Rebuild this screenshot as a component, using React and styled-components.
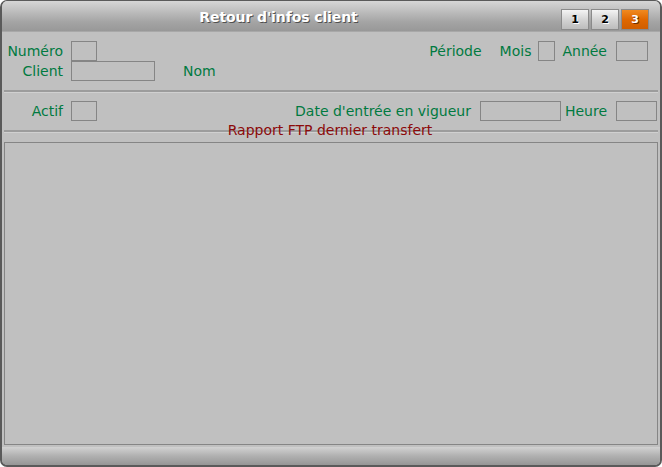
import React from 'react';
import styled, { createGlobalStyle } from 'styled-components';

const GlobalStyle = createGlobalStyle`
    html, body {
        margin: 0;
        padding: 0;
        background: #ffffff;
    }
    body {
        font-family: "DejaVu Sans", Verdana, sans-serif;
    }
`;

const Window = styled.div`
    width: 662px;
    height: 467px;
    box-sizing: border-box;
    display: flex;
    flex-direction: column;
    background: #c0c0c0;
    border: 2px solid #5a5a5a;
    border-top-width: 1px;
    border-radius: 7px;
    overflow: hidden;
`;

const TitleBar = styled.div`
    height: 30px;
    flex: none;
    display: flex;
    align-items: center;
    background: linear-gradient(#d6d6d6, #a4a4a4 70%, #989898);
    border-bottom: 1px solid #a8a8a8;
    padding-right: 11px;
`;

const Title = styled.div`
    flex: 1;
    text-align: center;
    padding-right: 6px;
    padding-top: 1px;
    font-family: "DejaVu Sans", sans-serif;
    font-weight: bold;
    font-size: 14px;
    color: #ffffff;
    text-shadow: 1px 1px 0 #505050;
    letter-spacing: -0.1px;
`;

const Tabs = styled.div`
    display: flex;
    gap: 2px;
    margin-top: 6px;
`;

const Tab = styled.div`
    width: 26px;
    height: 19px;
    display: flex;
    align-items: center;
    justify-content: center;
    font-family: "DejaVu Sans", sans-serif;
    font-weight: bold;
    font-size: 11px;
    border: 1px solid #8a8a8a;
    background: ${p => p.active
        ? 'linear-gradient(#f08a20, #e06800 50%, #d05e00)'
        : 'linear-gradient(#f4f4f4, #d4d4d4 50%, #bcbcbc)'};
    color: ${p => p.active ? '#ffffff' : '#000000'};
    text-shadow: ${p => p.active ? '1px 1px 0 #703000' : '1px 1px 0 #ffffff'};
`;

const Body = styled.div`
    flex: 1;
    display: flex;
    flex-direction: column;
    padding: 9px 2px 2px 2px;
`;

const Row = styled.div`
    display: flex;
    align-items: center;
    height: 20px;
    margin-top: ${p => p.top || 0}px;
    padding-right: ${p => p.pr || 0}px;
`;

const Label = styled.div`
    width: ${p => p.w ? p.w + 'px' : 'auto'};
    margin-left: ${p => p.ml || 0}px;
    text-align: ${p => p.left ? 'left' : 'right'};
    font-size: 14px;
    color: #007a40;
    white-space: nowrap;
`;

const Field = styled.div`
    width: ${p => p.w}px;
    height: 20px;
    box-sizing: border-box;
    border: 1px solid #858585;
    margin-left: ${p => p.ml || 0}px;
    flex: none;
`;

const Spacer = styled.div`
    flex: 1;
`;

const Separator = styled.div`
    height: 0;
    border-top: 2px solid #9c9c9c;
    border-bottom: 1px solid #d0d0d0;
    margin-top: ${p => p.top || 0}px;
`;

const GroupHeader = styled.div`
    position: relative;
    margin-top: 9px;
    display: flex;
    justify-content: center;
`;

const GroupLine = styled(Separator)`
    position: absolute;
    left: 0;
    right: 0;
    top: 0;
    margin: 0;
`;

const GroupTitle = styled.div`
    position: relative;
    margin-top: -8px;
    padding-right: 2px;
    font-size: 14px;
    color: #8c0a0a;
    line-height: 16px;
`;

const ReportBox = styled.div`
    flex: 1;
    margin-top: 4px;
    border: 1px solid #858585;
    box-sizing: border-box;
`;

const Footer = styled.div`
    height: 18px;
    flex: none;
    background: linear-gradient(#d2d2d2, #b0b0b0 50%, #969696);
`;

export default function App() {
    return <>
        <GlobalStyle />
        <Window>
            <TitleBar>
                <Title>Retour d'infos client</Title>
                <Tabs>
                    <Tab>1</Tab>
                    <Tab>2</Tab>
                    <Tab active>3</Tab>
                </Tabs>
            </TitleBar>
            <Body>
                <Row pr={10}>
                    <Label w={59}>Numéro</Label>
                    <Field w={26} ml={8} />
                    <Spacer />
                    <Label left>Période</Label>
                    <Label left ml={18}>Mois</Label>
                    <Field w={17} ml={7} />
                    <Label left ml={7}>Année</Label>
                    <Field w={32} ml={9} />
                </Row>
                <Row>
                    <Label w={59}>Client</Label>
                    <Field w={84} ml={8} />
                    <Label left ml={28}>Nom</Label>
                </Row>
                <Separator top={9} />
                <Row top={8} pr={1}>
                    <Label w={59}>Actif</Label>
                    <Field w={26} ml={8} />
                    <Spacer />
                    <Label left>Date d'entrée en vigueur</Label>
                    <Field w={81} ml={9} />
                    <Label left ml={4}>Heure</Label>
                    <Field w={41} ml={9} />
                </Row>
                <GroupHeader>
                    <GroupLine />
                    <GroupTitle>Rapport FTP dernier transfert</GroupTitle>
                </GroupHeader>
                <ReportBox />
            </Body>
            <Footer />
        </Window>
    </>;
}
